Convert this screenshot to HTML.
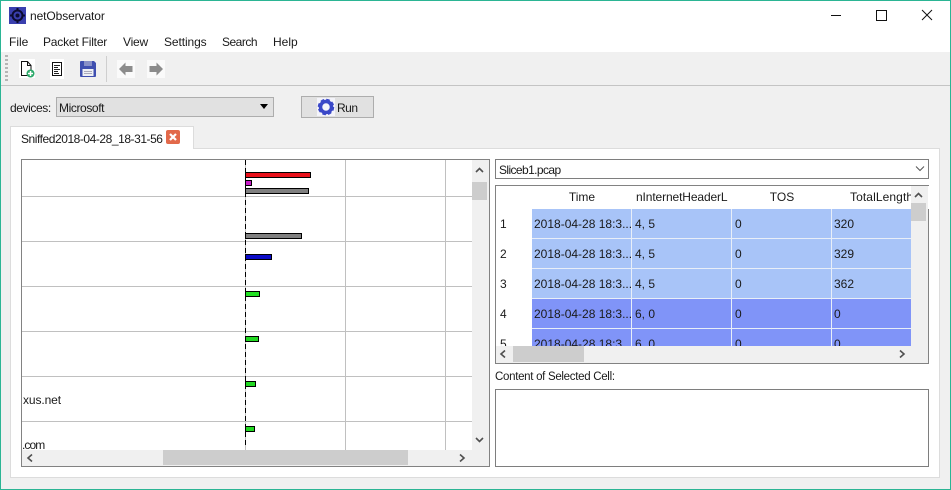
<!DOCTYPE html>
<html><head><meta charset="utf-8"><style>
html,body{margin:0;padding:0;width:951px;height:490px;overflow:hidden;background:#f0f0f0}
body{font-family:"Liberation Sans",sans-serif;font-size:12px;color:#1a1a1a;position:relative}
.a{position:absolute;box-sizing:border-box}
.t{position:absolute;white-space:nowrap;line-height:14px}
.hl{position:absolute;left:22px;width:450px;height:1px;background:#c0c0c0}
.vl{position:absolute;top:160px;width:1px;height:290px;background:#c0c0c0}
.bar{position:absolute;box-sizing:border-box;border:1px solid #000;height:6px;left:245px}
.c{position:absolute;height:29px;box-sizing:border-box}
.h{position:absolute;top:186px;height:23px;background:#fff;border-right:1px solid #e4e4e4;line-height:23px;text-align:center;overflow:hidden;white-space:nowrap}
</style></head><body>
<div class="a" style="left:0;top:0;width:951px;height:52px;background:#fff"></div>
<div class="a" style="left:0;top:85px;width:951px;height:1px;background:#c4c4c4"></div>

<svg class="a" style="left:9px;top:7px" width="17" height="17" viewBox="0 0 17 17"><rect width="17" height="17" fill="#3a3fae"/><circle cx="8.500" cy="8.500" r="5" fill="none" stroke="#0c0c30" stroke-width="2"/><circle cx="8.500" cy="8.500" r="2" fill="#0c0c30"/><path d="M8.500 1v2M8.500 14v2M1 8.500h2M14 8.500h2" stroke="#0c0c30" stroke-width="2"/></svg>
<div class="t" style="left:30px;top:9px;letter-spacing:-.1px">netObservator</div>

<svg class="a" style="left:830px;top:5px" width="121" height="22" viewBox="0 0 121 22" fill="none" stroke="#111"><path d="M1 10.500h10"/><rect x="46.500" y="5.500" width="10" height="10"/><path d="M92 5l10 10M102 5l-10 10"/></svg>

<div class="t" style="left:9px;top:35px">File</div>
<div class="t" style="left:43px;top:35px;letter-spacing:-.2px">Packet Filter</div>
<div class="t" style="left:123px;top:35px;letter-spacing:-.2px">View</div>
<div class="t" style="left:164px;top:35px;letter-spacing:-.1px">Settings</div>
<div class="t" style="left:222px;top:35px;letter-spacing:-.5px">Search</div>
<div class="t" style="left:273px;top:35px">Help</div>

<div class="a" style="left:5px;top:55px;width:3px;height:28px;background:repeating-linear-gradient(#b5b5b5 0 2px,transparent 2px 4px)"></div>
<div class="a" style="left:106px;top:56px;width:1px;height:26px;background:#cfcfcf"></div>

<svg class="a" style="left:18px;top:59px" width="18" height="20" viewBox="0 0 18 20"><rect x="1" y="0" width="16" height="19" fill="#fff"/><path d="M3.500 2.500h6l3.500 4v10h-9.500zM9.500 2.500v4h3.500" fill="#fff" stroke="#111"/><circle cx="12.500" cy="14.500" r="4" fill="#2aa868"/><path d="M12.500 12v5M10 14.500h5" stroke="#fff" stroke-width="1.500"/></svg>
<svg class="a" style="left:49px;top:59px" width="16" height="20" viewBox="0 0 16 20"><rect x="1" y="0" width="14" height="20" fill="#fff"/><rect x="3.500" y="3.500" width="9" height="13" fill="#fff" stroke="#111"/><path d="M5 6.500h6M5 8.500h4M5 10.500h6M5 12.500h4M5 14.500h5" stroke="#222"/></svg>
<svg class="a" style="left:80px;top:61px" width="16" height="16" viewBox="0 0 16 16"><path d="M0 1q0-1 1-1h13l2 2v13q0 1-1 1H1q-1 0-1-1z" fill="#3f4fb0"/><rect x="4" y="0" width="8" height="5" fill="#8890c8"/><rect x="2.500" y="8" width="11" height="7" fill="#eef0f5"/><path d="M4 10.500h8M4 12.500h8" stroke="#aab"/></svg>
<svg class="a" style="left:117px;top:60px" width="18" height="18" viewBox="0 0 18 18"><rect width="18" height="18" fill="#fafafa"/><path d="M2 9l6.500-6.500v3.500h7v6h-7v3.500z" fill="#8c8c8c"/></svg>
<svg class="a" style="left:147px;top:60px" width="18" height="18" viewBox="0 0 18 18"><rect width="18" height="18" fill="#fafafa"/><path d="M16 9l-6.500-6.500v3.500h-7v6h7v3.500z" fill="#8c8c8c"/></svg>

<div class="t" style="left:10px;top:101px;letter-spacing:-.4px">devices:</div>
<div class="a" style="left:56px;top:97px;width:218px;height:20px;background:#e1e1e1;border:1px solid #adadad"></div>
<div class="t" style="left:59px;top:101px;letter-spacing:-.4px">Microsoft</div>
<svg class="a" style="left:259px;top:104px" width="10" height="6"><path d="M1 0h8l-4 5z" fill="#000"/></svg>

<div class="a" style="left:301px;top:96px;width:73px;height:22px;background:#e1e1e1;border:1px solid #adadad"></div>
<svg class="a" style="left:317px;top:98px" width="18" height="18" viewBox="0 0 18 18"><rect width="18" height="18" fill="#f4f4fa"/><circle cx="9" cy="9" r="5.500" fill="none" stroke="#3a48c8" stroke-width="3.500"/><circle cx="9" cy="9" r="7" fill="none" stroke="#3a48c8" stroke-width="2.500" stroke-dasharray="3.500 2"/></svg>
<div class="t" style="left:337px;top:101px;letter-spacing:-.5px">Run</div>

<div class="a" style="left:10px;top:148px;width:930px;height:330px;background:#fff;border:1px solid #dcdcdc"></div>
<div class="a" style="left:10px;top:126px;width:184px;height:23px;background:#fff;border:1px solid #dcdcdc;border-bottom:0"></div>
<div class="t" style="left:21px;top:132px;letter-spacing:-.45px">Sniffed2018-04-28_18-31-56</div>
<svg class="a" style="left:166px;top:130px" width="14" height="14" viewBox="0 0 14 14"><rect width="14" height="14" rx="2" fill="#e2694a"/><path d="M4 4l6 6M10 4l-6 6" stroke="#fff" stroke-width="2.200"/></svg>

<!-- left plot -->
<div class="a" style="left:21px;top:159px;width:469px;height:308px;background:#fff;border:1px solid #828282"></div>
<div class="hl" style="top:196px"></div><div class="hl" style="top:241px"></div><div class="hl" style="top:286px"></div><div class="hl" style="top:331px"></div><div class="hl" style="top:376px"></div><div class="hl" style="top:421px"></div>
<div class="vl" style="left:245px"></div><div class="vl" style="left:345px"></div><div class="vl" style="left:445px"></div>
<div class="a" style="left:245px;top:160px;width:1px;height:288px;background:repeating-linear-gradient(#000 0 5px,transparent 5px 8px)"></div>
<div class="bar" style="top:172px;width:66px;background:#e8101a"></div>
<div class="bar" style="top:180px;width:7px;background:#c81cc8"></div>
<div class="bar" style="top:188px;width:64px;background:#808080"></div>
<div class="bar" style="top:233px;width:57px;background:#808080"></div>
<div class="bar" style="top:254px;width:27px;background:#0c0cc8"></div>
<div class="bar" style="top:291px;width:15px;background:#22e022"></div>
<div class="bar" style="top:336px;width:14px;background:#22d822"></div>
<div class="bar" style="top:381px;width:11px;background:#22d822"></div>
<div class="bar" style="top:426px;width:10px;background:#22d822"></div>
<div class="t" style="left:23px;top:393px;letter-spacing:-.1px">xus.net</div>
<div class="t" style="left:22px;top:438px;letter-spacing:-.9px">.com</div>

<div class="a" style="left:472px;top:160px;width:17px;height:306px;background:#f0f0f0"></div>
<div class="a" style="left:22px;top:450px;width:467px;height:16px;background:#f0f0f0"></div>
<div class="a" style="left:472px;top:182px;width:15px;height:18px;background:#cdcdcd"></div>
<div class="a" style="left:163px;top:450px;width:245px;height:15px;background:#cdcdcd"></div>
<svg class="a" style="left:0;top:0" width="951" height="490" fill="none" stroke="#505050" stroke-width="1.600">
<path d="M476 172l3.500-3.500 3.500 3.500M476 438l3.500 3.500 3.500-3.500M32 454.500l-4 3.500 4 3.500M460 454.500l4 3.500-4 3.500"/>
</svg>

<!-- combo -->
<div class="a" style="left:495px;top:159px;width:434px;height:20px;background:#fff;border:1px solid #7e7e7e"></div>
<div class="t" style="left:499px;top:163px;letter-spacing:-.6px">Sliceb1.pcap</div>
<svg class="a" style="left:915px;top:166px" width="10" height="6" fill="none" stroke="#555"><path d="M1 .5l4 4 4-4"/></svg>

<!-- table -->
<div class="a" style="left:495px;top:185px;width:434px;height:179px;background:#fff;border:1px solid #828282"></div>
<div class="h" style="left:532px;width:100px">Time</div>
<div class="h" style="left:632px;width:100px;text-align:left;padding-left:4px;letter-spacing:-.12px">nInternetHeaderL</div>
<div class="h" style="left:732px;width:100px">TOS</div>
<div class="h" style="left:832px;width:79px;border:0;text-align:left;padding-left:18px;letter-spacing:.1px">TotalLength</div>

<div class="a" style="left:532px;top:209px;width:379px;height:137px;overflow:hidden;background:#e8eef8">
<div class="c" style="left:0;top:0;width:99px;background:#a8c4f8"></div><div class="c" style="left:100px;top:0;width:99px;background:#a8c4f8"></div><div class="c" style="left:200px;top:0;width:99px;background:#a8c4f8"></div><div class="c" style="left:300px;top:0;width:79px;background:#a8c4f8"></div>
<div class="c" style="left:0;top:30px;width:99px;background:#a8c4f8"></div><div class="c" style="left:100px;top:30px;width:99px;background:#a8c4f8"></div><div class="c" style="left:200px;top:30px;width:99px;background:#a8c4f8"></div><div class="c" style="left:300px;top:30px;width:79px;background:#a8c4f8"></div>
<div class="c" style="left:0;top:60px;width:99px;background:#a8c4f8"></div><div class="c" style="left:100px;top:60px;width:99px;background:#a8c4f8"></div><div class="c" style="left:200px;top:60px;width:99px;background:#a8c4f8"></div><div class="c" style="left:300px;top:60px;width:79px;background:#a8c4f8"></div>
<div class="c" style="left:0;top:90px;width:99px;background:#8094f8"></div><div class="c" style="left:100px;top:90px;width:99px;background:#8094f8"></div><div class="c" style="left:200px;top:90px;width:99px;background:#8094f8"></div><div class="c" style="left:300px;top:90px;width:79px;background:#8094f8"></div>
<div class="c" style="left:0;top:120px;width:99px;background:#8094f8"></div><div class="c" style="left:100px;top:120px;width:99px;background:#8094f8"></div><div class="c" style="left:200px;top:120px;width:99px;background:#8094f8"></div><div class="c" style="left:300px;top:120px;width:79px;background:#8094f8"></div>
<div class="t" style="left:2px;top:8px">2018-04-28 18:3...</div><div class="t" style="left:103px;top:8px">4, 5</div><div class="t" style="left:203px;top:8px">0</div><div class="t" style="left:302px;top:8px">320</div>
<div class="t" style="left:2px;top:38px">2018-04-28 18:3...</div><div class="t" style="left:103px;top:38px">4, 5</div><div class="t" style="left:203px;top:38px">0</div><div class="t" style="left:302px;top:38px">329</div>
<div class="t" style="left:2px;top:68px">2018-04-28 18:3...</div><div class="t" style="left:103px;top:68px">4, 5</div><div class="t" style="left:203px;top:68px">0</div><div class="t" style="left:302px;top:68px">362</div>
<div class="t" style="left:2px;top:98px">2018-04-28 18:3...</div><div class="t" style="left:103px;top:98px">6, 0</div><div class="t" style="left:203px;top:98px">0</div><div class="t" style="left:302px;top:98px">0</div>
<div class="t" style="left:2px;top:128px">2018-04-28 18:3...</div><div class="t" style="left:103px;top:128px">6, 0</div><div class="t" style="left:203px;top:128px">0</div><div class="t" style="left:302px;top:128px">0</div>
</div>
<div class="t" style="left:500px;top:217px">1</div>
<div class="t" style="left:500px;top:247px">2</div>
<div class="t" style="left:500px;top:277px">3</div>
<div class="t" style="left:500px;top:307px">4</div>
<div class="a" style="left:496px;top:337px;width:30px;height:9px;overflow:hidden"><div class="t" style="left:4px;top:0">5</div></div>

<div class="a" style="left:911px;top:186px;width:17px;height:160px;background:#f0f0f0"></div>
<div class="a" style="left:496px;top:346px;width:432px;height:17px;background:#f0f0f0"></div>
<div class="a" style="left:911px;top:203px;width:15px;height:18px;background:#cdcdcd"></div>
<div class="a" style="left:513px;top:346px;width:71px;height:16px;background:#cdcdcd"></div>
<svg class="a" style="left:0;top:0" width="951" height="490" fill="none" stroke="#505050" stroke-width="1.600">
<path d="M915 197l3.500-3.500 3.500 3.500M505 350.500l-4 3.500 4 3.500M900 350.500l4 3.500-4 3.500"/>
</svg>

<div class="t" style="left:495px;top:370px;font-size:11.500px;letter-spacing:-.3px">Content of Selected Cell:</div>
<div class="a" style="left:495px;top:389px;width:434px;height:78px;background:#fff;border:1px solid #7e7e7e"></div>

<!-- window border -->
<div class="a" style="left:0;top:0;width:951px;height:490px;border:1px solid #2bb594"></div>
</body></html>
